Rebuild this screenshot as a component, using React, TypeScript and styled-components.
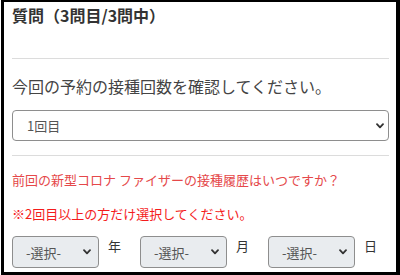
import styled, { createGlobalStyle } from 'styled-components';

const GlobalStyle = createGlobalStyle`
  html, body {
    margin: 0;
    padding: 0;
    background: #ffffff;
  }
  body {
    font-family: "Noto Sans CJK JP", "Noto Sans", sans-serif;
  }
`;

// black frame round the whole card
const Frame = styled.div`
  box-sizing: border-box;
  width: 399px;
  height: 275px;
  margin-left: 1px;
  border-style: solid;
  border-color: #000;
  border-width: 2px 4px 3px 3px;
  padding: 2px 7px 0 8px;
  overflow: hidden;
  background: #fff;
`;

const Title = styled.h2`
  margin: 0;
  font-size: 16px;
  line-height: 22px;
  font-weight: 700;
  color: #333;
`;

const Divider = styled.hr<{ $top: number }>`
  margin: ${p => p.$top}px 0 0;
  border: 0;
  border-top: 1px solid #dcdcdc;
  height: 0;
`;

const Question = styled.p`
  margin: 15px 0 0;
  font-size: 16px;
  line-height: 24px;
  color: #444;
`;

const CountField = styled.div`
  margin-top: 12px;
`;

const SelectWrap = styled.div<{ $width?: number }>`
  position: relative;
  width: ${p => (p.$width ? `${p.$width}px` : '100%')};
  flex-shrink: 0;
`;

const Select = styled.select<{ $muted?: boolean }>`
  appearance: none;
  -webkit-appearance: none;
  box-sizing: border-box;
  width: 100%;
  height: ${p => (p.$muted ? 32 : 31)}px;
  padding: 0 24px 0 ${p => (p.$muted ? 13 : 14)}px;
  border: 1px solid #8e8e8e;
  border-radius: 4px;
  background: ${p => (p.$muted ? '#e9ecef' : '#fff')};
  color: #555;
  font-family: "Noto Sans CJK JP", "Noto Sans", sans-serif;
  font-size: 13px;
  outline: none;
`;

const Chevron = styled.svg<{ $right: number }>`
  position: absolute;
  right: ${p => p.$right}px;
  top: 50%;
  margin-top: -3px;
  width: 8px;
  height: 6px;
  pointer-events: none;
`;

const Note = styled.p<{ $color: string }>`
  margin: 14px 0 0;
  font-size: 13px;
  line-height: 20px;
  color: ${p => p.$color};
`;

const DateRow = styled.div`
  display: grid;
  grid-template-columns: repeat(3, 128px);
  margin-top: 12px;
`;

const DateField = styled.div`
  display: flex;
  align-items: flex-start;
  gap: 9px;
`;

const Unit = styled.span`
  font-size: 13px;
  line-height: 20px;
  color: #333;
`;

function Arrow({ right }: { right: number }) {
  return (
    <Chevron $right={right} viewBox="0 0 8 6">
      <path d="M1 1.2 L4 4.4 L7 1.2" fill="none" stroke="#333" strokeWidth="1.8" strokeLinecap="round" strokeLinejoin="round" />
    </Chevron>
  );
}

const units = ['年', '月', '日'];

export default function App() {
  return (
    <>
      <GlobalStyle />
      <Frame>
        <Title>質問（3問目/3問中）</Title>
        <Divider $top={32} />
        <Question>今回の予約の接種回数を確認してください。</Question>
        <CountField>
          <SelectWrap>
            <Select defaultValue="1">
              <option value="1">1回目</option>
              <option value="2">2回目</option>
              <option value="3">3回目</option>
            </Select>
            <Arrow right={5} />
          </SelectWrap>
        </CountField>
        <Divider $top={14} />
        <Note $color="#e5484a">前回の新型コロナ ファイザーの接種履歴はいつですか？</Note>
        <Note $color="#f41c1c">※2回目以上の方だけ選択してください。</Note>
        <DateRow>
          {units.map(u => (
            <DateField key={u}>
              <SelectWrap $width={87}>
                <Select $muted defaultValue="">
                  <option value="">-選択-</option>
                </Select>
                <Arrow right={8} />
              </SelectWrap>
              <Unit>{u}</Unit>
            </DateField>
          ))}
        </DateRow>
      </Frame>
    </>
  );
}
